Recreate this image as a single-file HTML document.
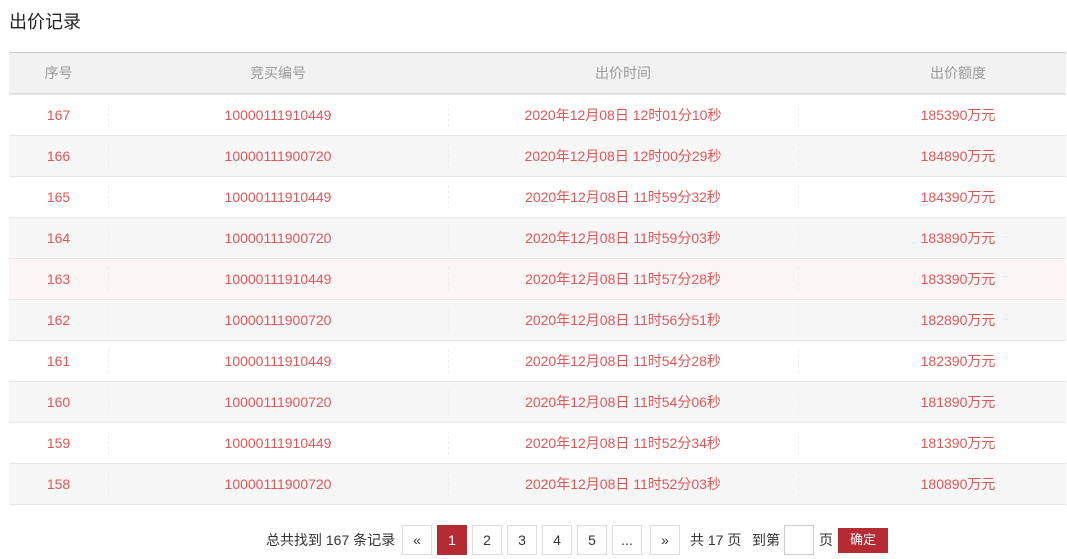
<!DOCTYPE html>
<html><head><meta charset="utf-8"><style>
*{margin:0;padding:0;box-sizing:border-box}
body{width:1067px;height:559px;background:#fff;font-family:"Liberation Sans","Noto Sans CJK SC",sans-serif;position:relative;overflow:hidden}
h1{position:absolute;left:9px;top:8px;font-size:18px;font-weight:normal;color:#222}
.tbl{position:absolute;left:9px;top:52px;width:1057px;border-top:1px solid #c8c8c8}
.row{display:flex;height:41px;line-height:40px;border-bottom:1px solid #e6e6e6;font-size:14px;color:#e35555}
.row.h{background:#f2f2f2;color:#999;border-bottom:2px solid #e0e0e0;height:42px;line-height:40px}
.row.g{background:#f7f7f7}
.row.p{background:#fcf6f6}
.c{text-align:center;position:relative}
.row:not(.h) .c+.c::before{content:"";position:absolute;left:0;top:8px;height:24px;border-left:1px dashed #eee}
.c1{width:99px}.c2{width:340px}.c3{width:350px}.c4{width:268px;padding-left:52px}
.pg{position:absolute;top:525px;left:0;width:1067px;height:30px;font-size:14px;color:#333}
.pg span{position:absolute;top:0;line-height:30px}
.b{position:absolute;top:0;width:30px;height:30px;border:1px solid #ddd;text-align:center;line-height:28px;font-size:14px;color:#333}
.b.a{background:#b52a33;border-color:#b52a33;color:#fff}
</style></head><body>
<h1>出价记录</h1>
<div class="tbl">
<div class="row h"><div class="c c1">序号</div><div class="c c2">竞买编号</div><div class="c c3">出价时间</div><div class="c c4">出价额度</div></div>
<div class="row"><div class="c c1">167</div><div class="c c2">10000111910449</div><div class="c c3">2020年12月08日 12时01分10秒</div><div class="c c4">185390万元</div></div>
<div class="row g"><div class="c c1">166</div><div class="c c2">10000111900720</div><div class="c c3">2020年12月08日 12时00分29秒</div><div class="c c4">184890万元</div></div>
<div class="row"><div class="c c1">165</div><div class="c c2">10000111910449</div><div class="c c3">2020年12月08日 11时59分32秒</div><div class="c c4">184390万元</div></div>
<div class="row g"><div class="c c1">164</div><div class="c c2">10000111900720</div><div class="c c3">2020年12月08日 11时59分03秒</div><div class="c c4">183890万元</div></div>
<div class="row p"><div class="c c1">163</div><div class="c c2">10000111910449</div><div class="c c3">2020年12月08日 11时57分28秒</div><div class="c c4">183390万元</div></div>
<div class="row g"><div class="c c1">162</div><div class="c c2">10000111900720</div><div class="c c3">2020年12月08日 11时56分51秒</div><div class="c c4">182890万元</div></div>
<div class="row"><div class="c c1">161</div><div class="c c2">10000111910449</div><div class="c c3">2020年12月08日 11时54分28秒</div><div class="c c4">182390万元</div></div>
<div class="row g"><div class="c c1">160</div><div class="c c2">10000111900720</div><div class="c c3">2020年12月08日 11时54分06秒</div><div class="c c4">181890万元</div></div>
<div class="row"><div class="c c1">159</div><div class="c c2">10000111910449</div><div class="c c3">2020年12月08日 11时52分34秒</div><div class="c c4">181390万元</div></div>
<div class="row g"><div class="c c1">158</div><div class="c c2">10000111900720</div><div class="c c3">2020年12月08日 11时52分03秒</div><div class="c c4">180890万元</div></div>
</div>
<div class="pg">
<span style="left:266px">总共找到 167 条记录</span>
<div class="b" style="left:402px">«</div>
<div class="b a" style="left:437px">1</div>
<div class="b" style="left:472px">2</div>
<div class="b" style="left:507px">3</div>
<div class="b" style="left:542px">4</div>
<div class="b" style="left:577px">5</div>
<div class="b" style="left:612px">...</div>
<div class="b" style="left:650px">»</div>
<span style="left:690px">共 17 页</span>
<span style="left:752px">到第</span>
<div class="b" style="left:784px;width:30px;border-color:#ccc"></div>
<span style="left:819px">页</span>
<div class="b a" style="left:838px;width:50px;top:3px;height:25px;line-height:22px;font-size:13px">确定</div>
</div>
</body></html>
